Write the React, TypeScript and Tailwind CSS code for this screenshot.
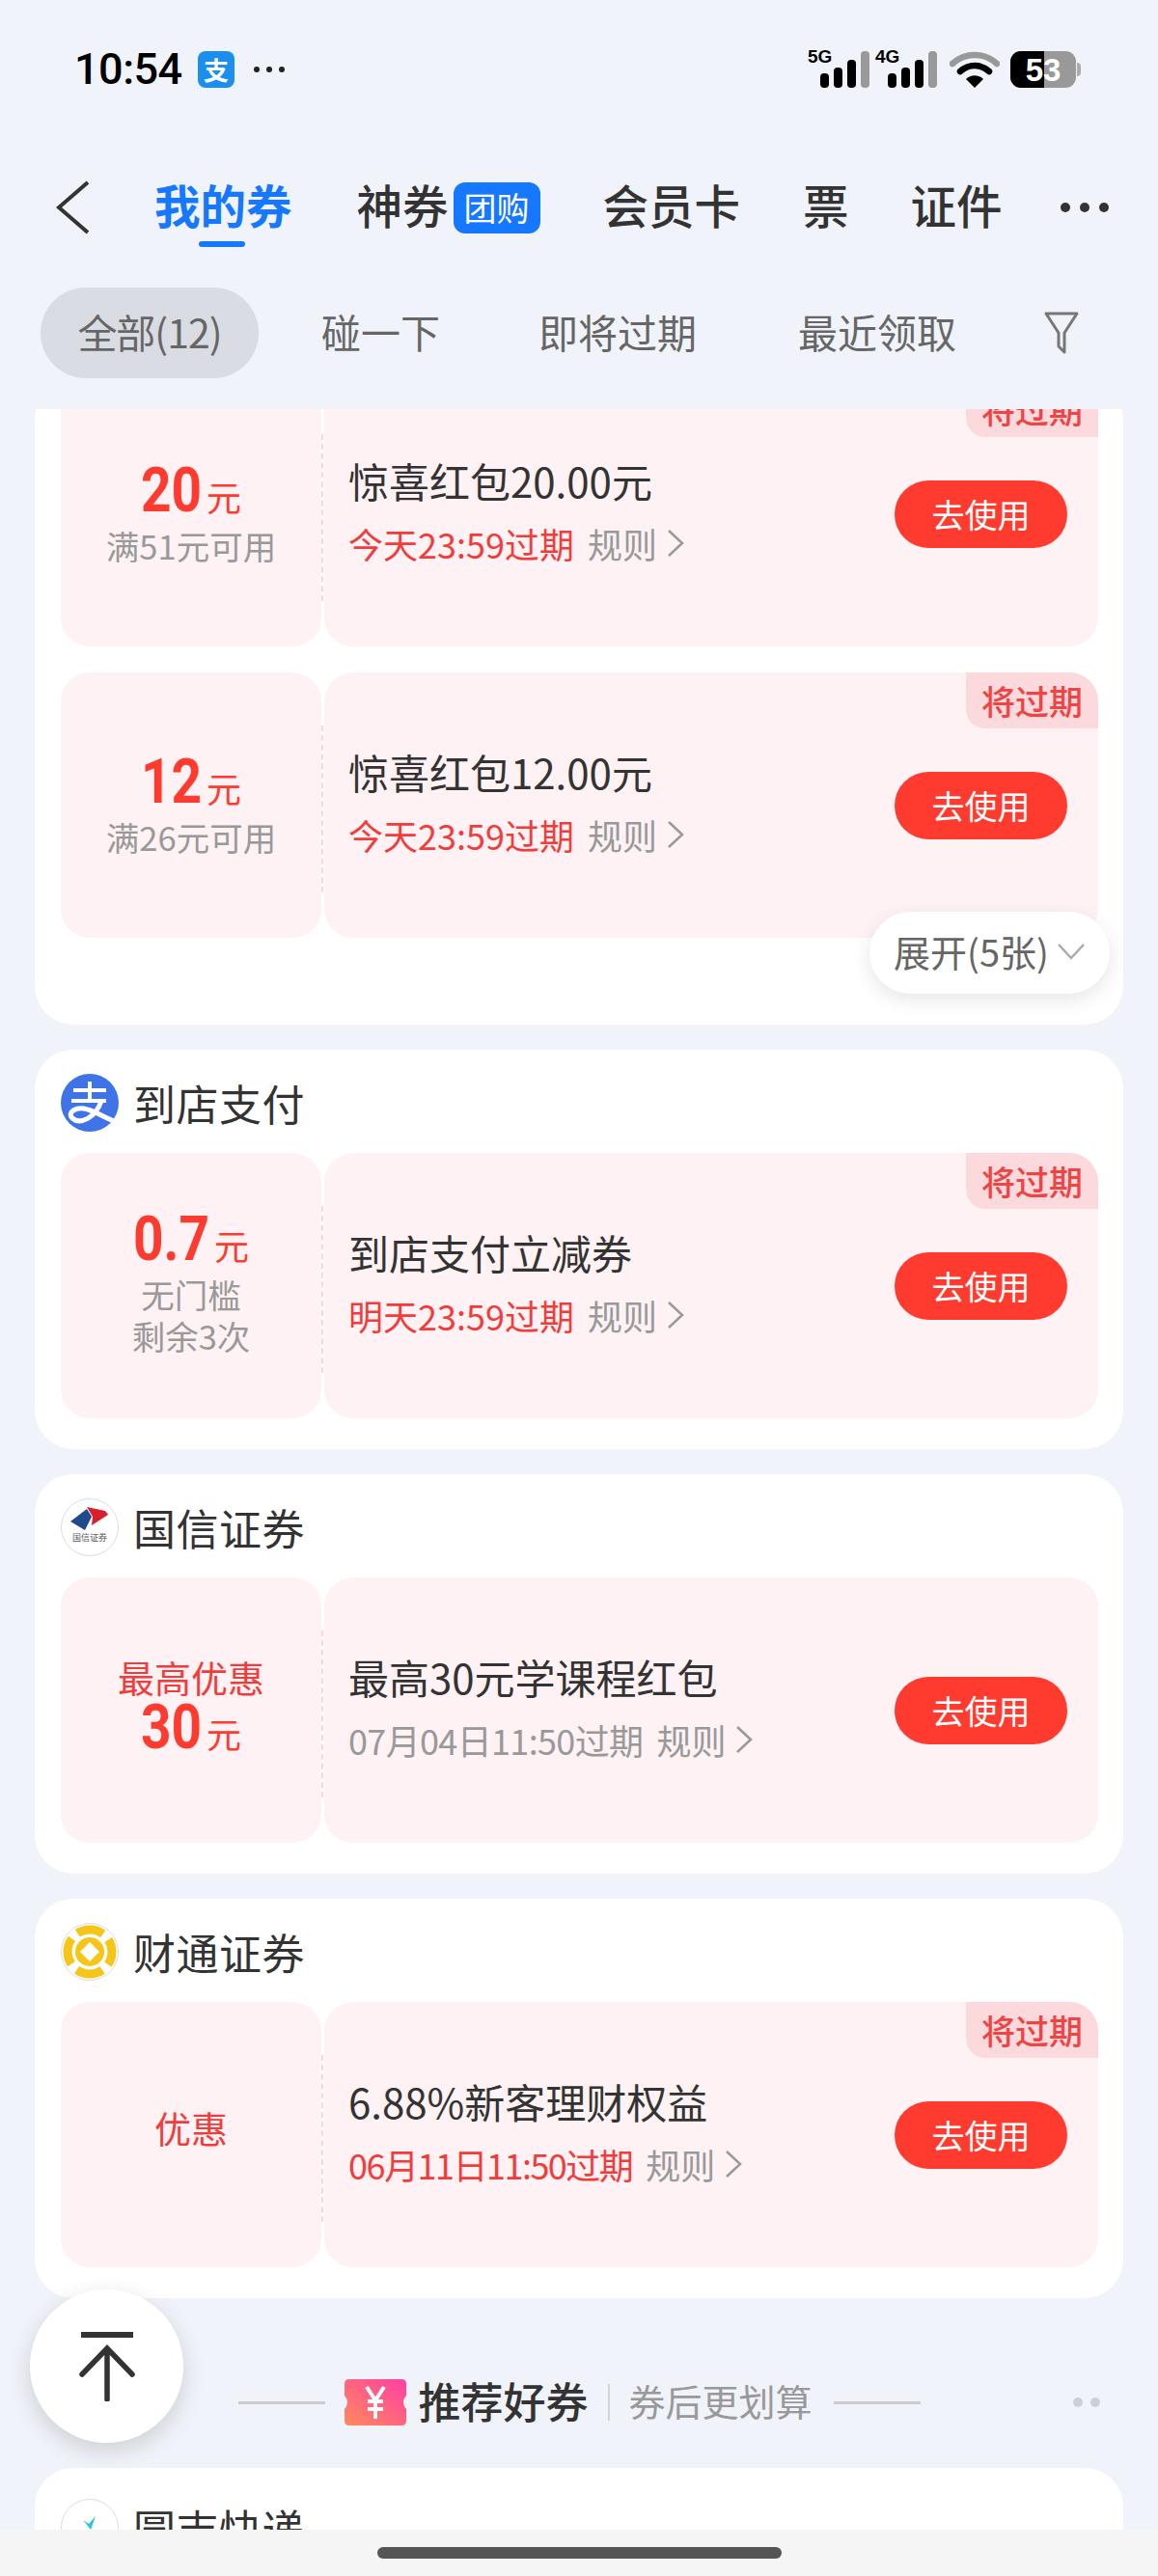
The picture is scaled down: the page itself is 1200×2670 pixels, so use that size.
import type { ReactNode } from "react";

const FONT = "font-['Noto_Sans_CJK_SC','Noto_Sans',sans-serif]";

type CouponType = {
  lead?: string;
  amount?: string;
  subs?: string[];
  title: string;
  expire: string;
  expireClass?: string;
  urgent: boolean;
  badge: boolean;
};

const Bars = ({ label }: { label: string }) => (
  <div className="relative w-[70px] h-[38px]">
    <span className="absolute left-0 top-[-4px] text-[19px] leading-[20px] font-bold text-black font-['Liberation_Sans',sans-serif]">
      {label}
    </span>
    <svg width="70" height="38" viewBox="0 0 70 38" className="absolute left-0 top-0">
      <rect x="13" y="23" width="9" height="15" rx="4" fill="#000" />
      <rect x="27" y="17" width="9" height="21" rx="4" fill="#000" />
      <rect x="41" y="9" width="9" height="29" rx="4" fill="#000" />
      <rect x="55" y="0" width="9" height="38" rx="4" fill="#999" />
    </svg>
  </div>
);

const StatusBar = () => (
  <div className="h-[144px] shrink-0 flex items-center pl-[77px] pr-[80px]">
    <span className="w-[110px] text-[45px] font-medium text-black font-['Roboto',sans-serif] tracking-[-0.5px]">10:54</span>
    <div className="ml-[18px] w-[38px] h-[38px] rounded-[8px] bg-[#1a8fee] flex items-center justify-center text-white text-[26px] leading-none font-bold">
      支
    </div>
    <div className="ml-[20px] flex gap-[7px]">
      <i className="w-[6px] h-[6px] rounded-full bg-[#222]" />
      <i className="w-[6px] h-[6px] rounded-full bg-[#222]" />
      <i className="w-[6px] h-[6px] rounded-full bg-[#222]" />
    </div>
    <div className="ml-auto flex items-center">
      <Bars label="5G" />
      <Bars label="4G" />
      <svg width="52" height="38" viewBox="0 0 52 38" className="ml-[7px]">
        <path d="M3 13 C16 1 36 1 49 13" fill="none" stroke="#999" strokeWidth="6.5" strokeLinecap="round" />
        <path d="M11 21 C20 13 32 13 41 21" fill="none" stroke="#000" strokeWidth="6.5" strokeLinecap="round" />
        <path d="M26 38 L17 29 C22 24 30 24 35 29 Z" fill="#000" />
      </svg>
      <div className="ml-[11px] relative w-[68px] h-[38px] rounded-[11px] overflow-hidden flex bg-[#999]">
        <div className="w-[35px] bg-black" />
        <span className="absolute inset-0 flex items-center justify-center text-white text-[33px] leading-none font-bold font-['Liberation_Sans',sans-serif]">
          53
        </span>
      </div>
      <div className="ml-[1px] w-[4px] h-[14px] rounded-r-full bg-[#aaa]" />
    </div>
  </div>
);

const Nav = () => (
  <div className="h-[142px] shrink-0 pb-[6px] flex items-center text-[47.5px] leading-none text-[#333] font-medium">
    <svg width="36" height="56" viewBox="0 0 36 56" className="ml-[58px] mt-[6px]">
      <path d="M33 2 L3 28 L33 54" fill="none" stroke="#333" strokeWidth="4" />
    </svg>
    <div className="ml-[66px] relative text-[#1677ff] font-bold">
      我的券
      <div className="absolute left-[46px] top-[62px] w-[48px] h-[6px] rounded-full bg-[#1677ff]" />
    </div>
    <div className="ml-[67px]">神券</div>
    <div className="ml-[5px] mt-[6px] w-[90px] h-[53px] rounded-[12px] bg-[#1677ff] text-white text-[34px] flex items-center justify-center font-normal">
      团购
    </div>
    <div className="ml-[65px]">会员卡</div>
    <div className="ml-[65px]">票</div>
    <div className="ml-[64px]">证件</div>
    <div className="ml-[60px] mt-[6px] flex gap-[10px]">
      <i className="w-[10px] h-[10px] rounded-full bg-[#333]" />
      <i className="w-[10px] h-[10px] rounded-full bg-[#333]" />
      <i className="w-[10px] h-[10px] rounded-full bg-[#333]" />
    </div>
  </div>
);

const Tabs = () => (
  <div className="h-[138px] shrink-0 pt-[12px] flex items-start text-[41px] text-[#666] leading-none">
    <div className="ml-[42px] w-[226px] h-[94px] pb-[3px] rounded-[47px] bg-[#d9dce2] flex items-center justify-center tracking-[-1px]">全部(12)</div>
    <div className="ml-[65px] h-[94px] pb-[3px] flex items-center">碰一下</div>
    <div className="ml-[102px] h-[94px] pb-[3px] flex items-center">即将过期</div>
    <div className="ml-[105px] h-[94px] pb-[3px] flex items-center">最近领取</div>
    <svg width="36" height="44" viewBox="0 0 36 44" className="ml-[91px] mt-[25px]">
      <path d="M2 2 H34 L21 22 V42 L15 36 V22 Z" fill="none" stroke="#777" strokeWidth="3" strokeLinejoin="round" />
    </svg>
  </div>
);

const Chevron = () => (
  <svg width="18" height="30" viewBox="0 0 18 30" className="ml-[10px]">
    <path d="M2 2 L16 15 L2 28" fill="none" stroke="#999" strokeWidth="2.5" />
  </svg>
);

const leftPad = (c: CouponType) => {
  if (c.lead) return c.amount ? "pb-[10px]" : "pb-[16px]";
  return c.subs?.length === 1 ? "pt-[6px]" : "pt-[1px]";
};

const Coupon = ({ c }: { c: CouponType }) => (
  <div className="flex h-[275px] gap-[3px] relative">
    <div className={`w-[270px] shrink-0 rounded-[30px] bg-[#fef2f4] flex flex-col items-center justify-center ${leftPad(c)}`}>
      {c.lead && <div className="text-[38px] leading-[56px] text-[#f23c3c]">{c.lead}</div>}
      {c.amount && (
        <div className="flex items-baseline text-[#ff3b30] leading-[60px]">
          {/* stretched upward from the baseline to get the tall narrow number face */}
          <span className="inline-block origin-[50%_42px] scale-y-[1.18] text-[55px] leading-[46px] font-bold font-['Roboto',sans-serif]">
            {c.amount}
          </span>
          <span className="text-[36px] ml-[5px]">元</span>
        </div>
      )}
      {c.subs?.map((s) => (
        <div key={s} className="text-[34.5px] leading-[43px] text-[#999]">
          {s}
        </div>
      ))}
    </div>
    <div className="absolute left-[270px] top-[55px] h-[173px] border-l-2 border-dashed border-[#fbd5dc]" />
    <div className="flex-1 rounded-[30px] bg-[#fef2f4] flex items-center pl-[25px] pr-[32px] relative overflow-hidden">
      <div className="flex-1 pb-[7px]">
        <div className="text-[42px] leading-[56px] text-[#333]">{c.title}</div>
        <div className="mt-[12px] flex items-center text-[36px] leading-[50px]">
          <span className={`${c.urgent ? "text-[#f23c3c]" : "text-[#999]"} ${c.expireClass ?? ""}`}>{c.expire}</span>
          <span className="ml-[14px] text-[#999]">规则</span>
          <Chevron />
        </div>
      </div>
      <div className="w-[179px] h-[70px] rounded-[35px] bg-[#ff3b30] text-white text-[34px] flex items-center justify-center">
        去使用
      </div>
      {c.badge && (
        <div className="absolute right-0 top-0 w-[137px] h-[58px] rounded-bl-[20px] bg-[#fbd9dc] text-[#ee4444] text-[35px] font-medium flex items-center justify-center">
          将过期
        </div>
      )}
    </div>
  </div>
);

const AlipayLogo = () => (
  <svg width="60" height="60" viewBox="0 0 60 60">
    <circle cx="30" cy="30" r="30" fill="#3f74e8" />
    <path d="M13 17 H47 M30 8 V28 M11 28 H47" fill="none" stroke="#fff" strokeWidth="4" />
    <path d="M42 28 C36 46 20 53 12 46 C6 40 16 33 28 37 C38 40 48 47 58 50" fill="none" stroke="#fff" strokeWidth="5" />
  </svg>
);

const GuosenLogo = () => (
  <div className="w-[60px] h-[60px] rounded-full border border-[#ddd] bg-white overflow-hidden flex flex-col items-center">
    <svg width="40" height="26" viewBox="0 0 40 26" className="mt-[6px]">
      <path d="M0 17 L17 4 L22 12 L15 26 Z" fill="#1f4a8c" />
      <path d="M17 2 L36 6 L39 10 L22 21 L23 12 Z" fill="#d9202a" />
    </svg>
    <span className="text-[9px] leading-[10px] text-[#555] mt-[3px]">国信证券</span>
  </div>
);

const CaitongLogo = () => (
  <svg width="60" height="60" viewBox="0 0 60 60">
    <circle cx="30" cy="30" r="29.5" fill="#fff" stroke="#ddd" />
    <circle cx="30" cy="30" r="23" fill="none" stroke="#f5c518" strokeWidth="9" strokeDasharray="28 8.1" strokeDashoffset="14" />
    <circle cx="30" cy="30" r="15" fill="#f5c518" />
    <path d="M30 20 L40 30 L30 40 L20 30 Z" fill="#fff" />
  </svg>
);

const CardHeader = ({ logo, name }: { logo: ReactNode; name: string }) => (
  <div className="h-[107px] flex items-center gap-[15px] pt-[2px]">
    {logo}
    <span className="text-[44px] tracking-[0.5px] text-[#333] leading-none">{name}</span>
  </div>
);

const Card = ({ children }: { children: ReactNode }) => (
  <div className="mx-[36px] rounded-[40px] bg-white pl-[27px] pr-[26px] pb-[32px]">{children}</div>
);

export default function App() {
  return (
    <div className={`relative w-[1200px] h-[2670px] overflow-hidden flex flex-col bg-[#f0f3f9] ${FONT}`}>
      <StatusBar />
      <Nav />
      <Tabs />
      <div className="flex-1 min-h-0 overflow-hidden">
        <div className="-mt-[29px] flex flex-col gap-[26px]">
          <div className="relative mx-[36px] rounded-[40px] bg-white pl-[27px] pr-[26px] pb-[90px] flex flex-col gap-[27px]">
            <Coupon
              c={{ amount: "20", subs: ["满51元可用"], title: "惊喜红包20.00元", expire: "今天23:59过期", urgent: true, badge: true }}
            />
            <Coupon
              c={{ amount: "12", subs: ["满26元可用"], title: "惊喜红包12.00元", expire: "今天23:59过期", urgent: true, badge: true }}
            />
            <div className="absolute right-[14px] bottom-[32px] w-[249px] h-[85px] pb-[4px] rounded-[43px] bg-white shadow-[0_6px_20px_rgba(0,0,0,0.1)] flex items-center justify-center text-[38px] text-[#666]">
              展开(5张)
              <svg width="30" height="18" viewBox="0 0 30 18" className="ml-[8px]">
                <path d="M2 2 L15 16 L28 2" fill="none" stroke="#aaa" strokeWidth="2.5" />
              </svg>
            </div>
          </div>
          <Card>
            <CardHeader logo={<AlipayLogo />} name="到店支付" />
            <Coupon
              c={{ amount: "0.7", subs: ["无门槛", "剩余3次"], title: "到店支付立减券", expire: "明天23:59过期", urgent: true, badge: true }}
            />
          </Card>
          <Card>
            <CardHeader logo={<GuosenLogo />} name="国信证券" />
            <Coupon
              c={{ lead: "最高优惠", amount: "30", title: "最高30元学课程红包", expire: "07月04日11:50过期", expireClass: "tracking-[-0.65px]", urgent: false, badge: false }}
            />
          </Card>
          <Card>
            <CardHeader logo={<CaitongLogo />} name="财通证券" />
            <Coupon
              c={{ lead: "优惠", title: "6.88%新客理财权益", expire: "06月11日11:50过期", expireClass: "tracking-[-1.5px]", urgent: true, badge: true }}
            />
          </Card>
          <div className="h-[150px] -mt-[26px] pt-[84px] relative flex items-start justify-center">
            <div className="flex items-center ml-[1px] whitespace-nowrap">
              <div className="w-[90px] h-[3px] bg-[#ccc]" />
              <svg width="64" height="48" viewBox="0 0 64 48" className="ml-[20px] shrink-0">
                <defs>
                  <linearGradient id="tk" x1="0" y1="1" x2="1" y2="0">
                    <stop offset="0" stopColor="#ff8a5c" />
                    <stop offset="1" stopColor="#ff3fa4" />
                  </linearGradient>
                </defs>
                <path d="M5 0 H59 Q64 0 64 5 V17 Q58 24 64 31 V43 Q64 48 59 48 H5 Q0 48 0 43 V31 Q6 24 0 17 V5 Q0 0 5 0 Z" fill="url(#tk)" />
                <path d="M23 8 L32 22 L41 8 M24 23 H40 M24 31 H40 M32 22 V41" fill="none" stroke="#fff" strokeWidth="4" />
              </svg>
              <span className="ml-[12px] pb-[4px] text-[44px] leading-none text-[#333] font-medium">推荐好券</span>
              <div className="ml-[21px] w-[2px] h-[38px] bg-[#d5d5d5]" />
              <span className="ml-[19px] pb-[4px] text-[38px] leading-none text-[#999]">券后更划算</span>
              <div className="ml-[22px] w-[90px] h-[3px] bg-[#ccc]" />
            </div>
            <div className="absolute right-[60px] top-[103px] flex gap-[8px]">
              <i className="w-[10px] h-[10px] rounded-full bg-[#ccd0d6]" />
              <i className="w-[10px] h-[10px] rounded-full bg-[#ccd0d6]" />
            </div>
          </div>
          <Card>
            <div className="h-[120px] pt-[32px] flex items-start gap-[15px]">
              <div className="w-[60px] h-[60px] rounded-full border border-[#ddd] flex items-center justify-center">
                <svg width="16" height="20" viewBox="0 0 16 20" className="mb-[6px]">
                  <path d="M1 5 L7 9 L14 1 L9 15 Z M7 17 H10 V20 H7 Z" fill="#27c9d8" />
                </svg>
              </div>
              <span className="text-[44px] tracking-[0.5px] text-[#333] leading-[60px]">圆吉快递</span>
            </div>
          </Card>
        </div>
      </div>
      <div className="h-[48px] shrink-0 bg-[#f5f5f5] flex justify-center pt-[18px]">
        <div className="w-[419px] h-[12px] rounded-[6px] bg-[#555]" />
      </div>
      <div className="absolute left-[31px] top-[2373px] w-[159px] h-[159px] rounded-full bg-white shadow-[0_8px_24px_rgba(0,0,0,0.15)] flex items-center justify-center">
        <svg width="60" height="72" viewBox="0 0 60 72">
          <path d="M3 3 H57" stroke="#333" strokeWidth="6" />
          <path d="M30 70 V17 M4 44 L30 17 L56 44" fill="none" stroke="#333" strokeWidth="5.5" strokeLinecap="round" />
        </svg>
      </div>
    </div>
  );
}
